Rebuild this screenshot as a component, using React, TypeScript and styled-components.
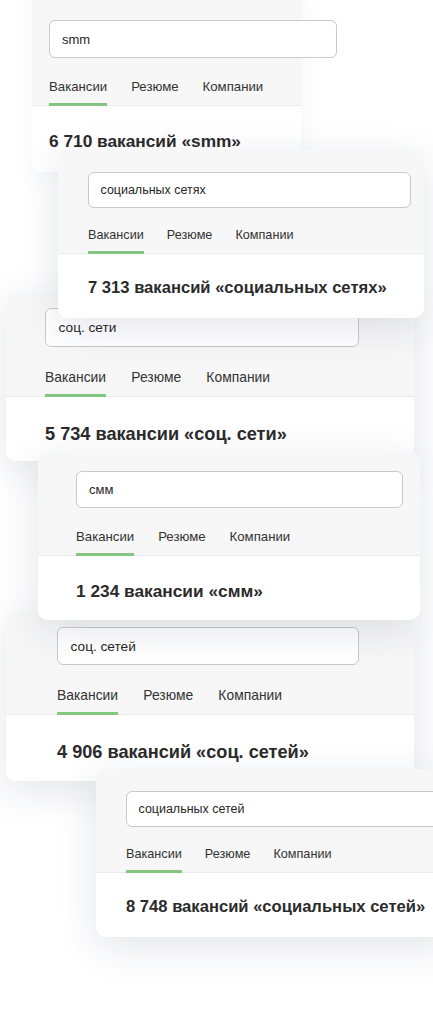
import React from "react";
import styled, { createGlobalStyle } from "styled-components";

const GlobalStyle = createGlobalStyle`
  html, body {
    margin: 0;
    padding: 0;
    background: #ffffff;
  }
  body {
    font-family: "Liberation Sans", Arial, sans-serif;
    -webkit-font-smoothing: antialiased;
  }
`;

const Canvas = styled.div`
  position: relative;
  width: 433px;
  height: 1014px;
  overflow: hidden;
  background: #ffffff;
`;

type CardProps = {
  $x: number;
  $y: number;
  $w: number;
  $h?: number;
  $z: number;
  $flat?: boolean;
};

const Card = styled.section<CardProps>`
  position: absolute;
  left: ${(p) => p.$x}px;
  top: ${(p) => p.$y}px;
  width: ${(p) => p.$w}px;
  height: ${(p) => (p.$h ? `${p.$h}px` : "auto")};
  z-index: ${(p) => p.$z};
  display: flex;
  flex-direction: column;
  background: #ffffff;
  border-radius: 10px;
  box-shadow: ${(p) =>
    p.$flat
      ? "0 6px 24px rgba(40, 50, 90, 0.05)"
      : "0 10px 40px rgba(30, 40, 80, 0.12)"};
`;

const Header = styled.div<{ $padTop: number; $padL: number }>`
  display: flex;
  flex-direction: column;
  align-items: flex-start;
  padding: ${(p) => p.$padTop}px 0 0 ${(p) => p.$padL}px;
  background: #f7f7f7;
  border-bottom: 1px solid #ebebeb;
  border-radius: 10px 10px 0 0;
`;

const SearchField = styled.div<{ $w: number; $h: number; $s: number }>`
  box-sizing: border-box;
  width: ${(p) => p.$w}px;
  height: ${(p) => p.$h}px;
  flex-shrink: 0;
  display: flex;
  align-items: center;
  padding-left: ${(p) => 12 * p.$s}px;
  background: #ffffff;
  border: 1px solid #c9c9c9;
  border-radius: 6px;
  font-size: ${(p) => 13 * p.$s}px;
  color: #262626;
  white-space: nowrap;
`;

const Tabs = styled.nav<{ $s: number }>`
  display: flex;
  gap: ${(p) => 24 * p.$s}px;
  margin-top: ${(p) => 20.5 * p.$s}px;
  margin-bottom: -1px;
`;

const Tab = styled.span<{ $s: number; $active?: boolean }>`
  position: relative;
  font-size: ${(p) => 13.2 * p.$s}px;
  line-height: ${(p) => 16 * p.$s}px;
  padding-bottom: ${(p) => 11 * p.$s}px;
  color: #333333;
  white-space: nowrap;

  &::after {
    content: "";
    position: absolute;
    left: 0;
    right: 0;
    bottom: 0;
    height: 3px;
    background: ${(p) => (p.$active ? "#82c67f" : "transparent")};
  }
`;

const Result = styled.div<{ $s: number; $padL: number }>`
  padding: ${(p) => 25.5 * p.$s}px 0 ${(p) => 21 * p.$s}px ${(p) => p.$padL}px;
  font-size: ${(p) => 17.3 * p.$s}px;
  line-height: ${(p) => 20 * p.$s}px;
  font-weight: 700;
  color: #2b2b2b;
  white-space: nowrap;
`;

type CardData = {
  x: number;
  y: number;
  w: number;
  h?: number;
  z: number;
  padTop: number;
  padL: number;
  inputW: number;
  inputH: number;
  s: number;
  query: string;
  result: string;
  flat?: boolean;
};

const cards: CardData[] = [
  {
    x: 32, y: -12, w: 269, z: 1, padTop: 32, padL: 17, inputW: 288, inputH: 38,
    s: 1, query: "smm", result: "6 710 вакансий «smm»", flat: true,
  },
  {
    x: 58, y: 150, w: 366, h: 168, z: 3, padTop: 22, padL: 30, inputW: 323, inputH: 36,
    s: 0.96, query: "социальных сетях", result: "7 313 вакансий «социальных сетях»",
  },
  {
    x: 6, y: 294, w: 408, h: 167, z: 2, padTop: 14, padL: 39, inputW: 314, inputH: 39,
    s: 1.05, query: "соц. сети", result: "5 734 вакансии «соц. сети»",
  },
  {
    x: 38, y: 452, w: 382, h: 168, z: 4, padTop: 19, padL: 38, inputW: 327, inputH: 37,
    s: 1, query: "смм", result: "1 234 вакансии «смм»",
  },
  {
    x: 6, y: 613, w: 408, h: 168, z: 3, padTop: 14, padL: 51, inputW: 302, inputH: 38,
    s: 1.05, query: "соц. сетей", result: "4 906 вакансий «соц. сетей»",
  },
  {
    x: 96, y: 769, w: 360, h: 168, z: 5, padTop: 22, padL: 30, inputW: 340, inputH: 36,
    s: 0.96, query: "социальных сетей", result: "8 748 вакансий «социальных сетей»",
  },
];

const tabs = ["Вакансии", "Резюме", "Компании"];

export default function App() {
  return (
    <>
      <GlobalStyle />
      <Canvas>
        {cards.map((c, i) => (
          <Card key={i} $x={c.x} $y={c.y} $w={c.w} $h={c.h} $z={c.z} $flat={c.flat}>
            <Header $padTop={c.padTop} $padL={c.padL}>
              <SearchField $w={c.inputW} $h={c.inputH} $s={c.s}>
                {c.query}
              </SearchField>
              <Tabs $s={c.s}>
                {tabs.map((t, j) => (
                  <Tab key={t} $s={c.s} $active={j === 0}>
                    {t}
                  </Tab>
                ))}
              </Tabs>
            </Header>
            <Result $s={c.s} $padL={c.padL}>
              {c.result}
            </Result>
          </Card>
        ))}
      </Canvas>
    </>
  );
}
